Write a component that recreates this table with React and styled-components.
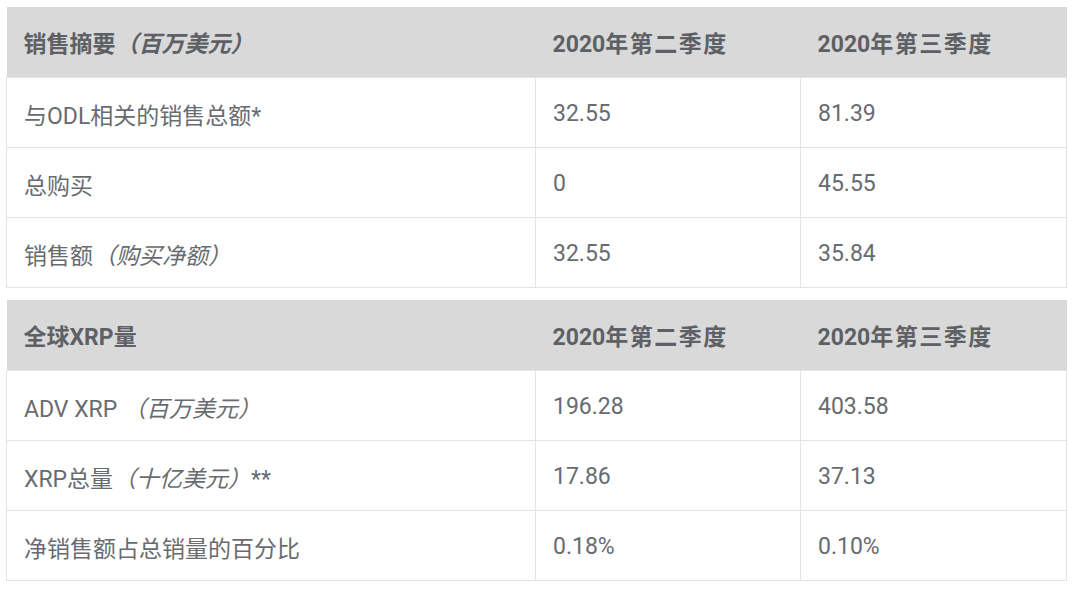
import React from 'react'
import styled, { createGlobalStyle } from 'styled-components'

const GlobalStyle = createGlobalStyle`
  body {
    margin: 0;
    padding: 7px 14px 0 6px;
    background: #fff;
    font-family: Roboto, "Noto Sans CJK SC", "Noto Sans", sans-serif;
  }
`

const Stack = styled.div`
  display: flex;
  flex-direction: column;
  gap: 12px;
  width: 1060px;
`

const Table = styled.table`
  width: 1060px;
  border-collapse: collapse;
  table-layout: fixed;
  font-size: 23px;
  color: #686b6f;
`

const HeadCell = styled.th`
  background: #d9d9d9;
  height: 70px;
  padding: 0 0 0 17px;
  text-align: left;
  font-weight: 700;
  color: #5d6064;
  white-space: nowrap;
`

const Cell = styled.td`
  height: 67px;
  padding: 2px 0 0 17px;
  border: 1px solid #e4e4e4;
  font-weight: 400;
  white-space: nowrap;
`

const Note = styled.i`
  font-style: italic;
`

const Quarter = styled.span`
  letter-spacing: 1.5px;
`

const YearHead = ({ q }) => (
  <>
    2020<Quarter>年第{q}季度</Quarter>
  </>
)

const DataTable = ({ title, rows }) => (
  <Table>
    <colgroup>
      <col style={{ width: 529 }} />
      <col style={{ width: 265 }} />
      <col style={{ width: 266 }} />
    </colgroup>
    <thead>
      <tr>
        <HeadCell>{title}</HeadCell>
        <HeadCell><YearHead q="二" /></HeadCell>
        <HeadCell><YearHead q="三" /></HeadCell>
      </tr>
    </thead>
    <tbody>
      {rows.map((r, i) => (
        <tr key={i}>
          <Cell>{r[0]}</Cell>
          <Cell>{r[1]}</Cell>
          <Cell>{r[2]}</Cell>
        </tr>
      ))}
    </tbody>
  </Table>
)

const sales = [
  ['与ODL相关的销售总额*', '32.55', '81.39'],
  ['总购买', '0', '45.55'],
  [<>销售额<Note>（购买净额）</Note></>, '32.55', '35.84'],
]

const volume = [
  [<>ADV XRP <Note>（百万美元）</Note></>, '196.28', '403.58'],
  [<>XRP总量<Note>（十亿美元）</Note>**</>, '17.86', '37.13'],
  ['净销售额占总销量的百分比', '0.18%', '0.10%'],
]

export default function App() {
  return (
    <>
      <GlobalStyle />
      <Stack>
        <DataTable title={<>销售摘要<Note>（百万美元）</Note></>} rows={sales} />
        <DataTable title="全球XRP量" rows={volume} />
      </Stack>
    </>
  )
}
